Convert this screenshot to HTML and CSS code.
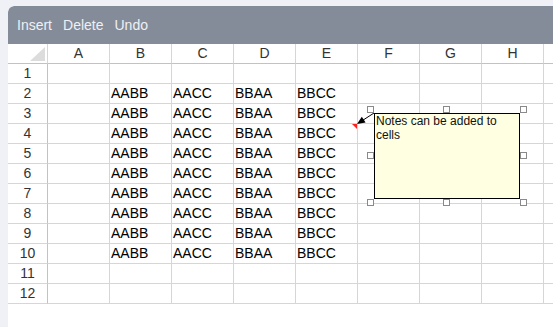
FILE: index.html
```html
<!DOCTYPE html>
<html>
<head>
<meta charset="utf-8">
<link rel="stylesheet" href="styles.css">
</head>
<body>
<div class="app">
  <div class="toolbar">
    <span class="tool">Insert</span>
    <span class="tool">Delete</span>
    <span class="tool">Undo</span>
  </div>
  <div class="sheet">
    <div class="hd corner"><span class="tri"></span></div>
    <div class="hd">A</div><div class="hd">B</div><div class="hd">C</div><div class="hd">D</div><div class="hd">E</div><div class="hd">F</div><div class="hd">G</div><div class="hd">H</div><div class="hd"></div>

    <div class="rh">1</div><div class="c"></div><div class="c"></div><div class="c"></div><div class="c"></div><div class="c"></div><div class="c"></div><div class="c"></div><div class="c"></div><div class="c"></div>
    <div class="rh">2</div><div class="c"></div><div class="c">AABB</div><div class="c">AACC</div><div class="c">BBAA</div><div class="c">BBCC</div><div class="c"></div><div class="c"></div><div class="c"></div><div class="c"></div>
    <div class="rh">3</div><div class="c"></div><div class="c">AABB</div><div class="c">AACC</div><div class="c">BBAA</div><div class="c">BBCC</div><div class="c"></div><div class="c"></div><div class="c"></div><div class="c"></div>
    <div class="rh">4</div><div class="c"></div><div class="c">AABB</div><div class="c">AACC</div><div class="c">BBAA</div><div class="c note-cell">BBCC<span class="flag"></span></div><div class="c"></div><div class="c"></div><div class="c"></div><div class="c"></div>
    <div class="rh">5</div><div class="c"></div><div class="c">AABB</div><div class="c">AACC</div><div class="c">BBAA</div><div class="c">BBCC</div><div class="c"></div><div class="c"></div><div class="c"></div><div class="c"></div>
    <div class="rh">6</div><div class="c"></div><div class="c">AABB</div><div class="c">AACC</div><div class="c">BBAA</div><div class="c">BBCC</div><div class="c"></div><div class="c"></div><div class="c"></div><div class="c"></div>
    <div class="rh">7</div><div class="c"></div><div class="c">AABB</div><div class="c">AACC</div><div class="c">BBAA</div><div class="c">BBCC</div><div class="c"></div><div class="c"></div><div class="c"></div><div class="c"></div>
    <div class="rh">8</div><div class="c"></div><div class="c">AABB</div><div class="c">AACC</div><div class="c">BBAA</div><div class="c">BBCC</div><div class="c"></div><div class="c"></div><div class="c"></div><div class="c"></div>
    <div class="rh">9</div><div class="c"></div><div class="c">AABB</div><div class="c">AACC</div><div class="c">BBAA</div><div class="c">BBCC</div><div class="c"></div><div class="c"></div><div class="c"></div><div class="c"></div>
    <div class="rh">10</div><div class="c"></div><div class="c">AABB</div><div class="c">AACC</div><div class="c">BBAA</div><div class="c">BBCC</div><div class="c"></div><div class="c"></div><div class="c"></div><div class="c"></div>
    <div class="rh">11</div><div class="c"></div><div class="c"></div><div class="c"></div><div class="c"></div><div class="c"></div><div class="c"></div><div class="c"></div><div class="c"></div><div class="c"></div>
    <div class="rh">12</div><div class="c"></div><div class="c"></div><div class="c"></div><div class="c"></div><div class="c"></div><div class="c"></div><div class="c"></div><div class="c"></div><div class="c"></div>
  </div>
</div>

<svg class="arrow" width="553" height="327" viewBox="0 0 553 327">
  <line x1="374" y1="113" x2="362" y2="120.8" stroke="#000" stroke-width="1"/>
  <polygon points="357,124 365.6,122.6 361.8,116.7" fill="#000"/>
</svg>

<div class="selection">
  <span class="h h-tl"></span><span class="h h-tm"></span><span class="h h-tr"></span>
  <span class="h h-ml"></span><span class="h h-mr"></span>
  <span class="h h-bl"></span><span class="h h-bm"></span><span class="h h-br"></span>
</div>
<div class="note">Notes can be added to cells</div>
</body>
</html>
```

FILE: styles.css
```css
html, body {
  margin: 0;
  padding: 0;
  height: 100%;
}
body {
  background: #f0f1f6;
  position: relative;
  overflow: hidden;
  font-family: "Liberation Sans", Arial, sans-serif;
}
.app {
  margin: 6px 0 0 8px;
  background: #ffffff;
  border-top-left-radius: 6px;
  height: calc(100% - 6px);
  overflow: hidden;
}
.toolbar {
  height: 38px;
  background: #848c99;
  border-top-left-radius: 6px;
  display: flex;
  align-items: center;
  gap: 11px;
  padding-left: 9px;
  box-sizing: border-box;
}
.tool {
  color: #eef0f4;
  font-size: 14px;
  line-height: 16px;
  padding-bottom: 1px;
}
.sheet {
  display: grid;
  grid-template-columns: 40px repeat(9, 62px);
  grid-auto-rows: 20px;
  font-size: 14px;
}
.sheet > div {
  box-sizing: border-box;
  border-right: 1px solid #d6d6d6;
  border-bottom: 1px solid #d6d6d6;
  line-height: 19px;
  white-space: nowrap;
  overflow: hidden;
}
.sheet > .hd {
  text-align: center;
  color: #333;
  border-bottom-color: #c2c2c2;
}
.sheet > .rh {
  text-align: center;
  color: #333;
  border-right-color: #c2c2c2;
}
.sheet > .c {
  color: #000;
  padding-left: 1px;
}
.corner {
  position: relative;
}
.tri {
  position: absolute;
  right: 2px;
  bottom: 2px;
  width: 0;
  height: 0;
  border-left: 15px solid transparent;
  border-bottom: 14px solid #dcdcdc;
}
.note-cell {
  position: relative;
}
.flag {
  position: absolute;
  top: 0;
  right: 0;
  width: 0;
  height: 0;
  border-top: 5px solid #ff2020;
  border-left: 5px solid transparent;
}
.arrow {
  position: absolute;
  left: 0;
  top: 0;
  pointer-events: none;
}
.selection {
  position: absolute;
  left: 370px;
  top: 109px;
  width: 153px;
  height: 93px;
}
.h {
  position: absolute;
  width: 7px;
  height: 7px;
  box-sizing: border-box;
  border: 1px solid #8a8a8a;
  background: #ffffff;
}
.h-tl { left: -3px; top: -3px; }
.h-tm { left: 73px; top: -3px; }
.h-tr { left: 150px; top: -3px; }
.h-ml { left: -3px; top: 43px; }
.h-mr { left: 150px; top: 43px; }
.h-bl { left: -3px; top: 90px; }
.h-bm { left: 73px; top: 90px; }
.h-br { left: 150px; top: 90px; }
.note {
  position: absolute;
  left: 374px;
  top: 113px;
  width: 146px;
  height: 86px;
  box-sizing: border-box;
  border: 1px solid #000;
  background: #ffffe1;
  font-size: 12px;
  line-height: 14px;
  color: #111;
  padding: 0 1px;
}
```
